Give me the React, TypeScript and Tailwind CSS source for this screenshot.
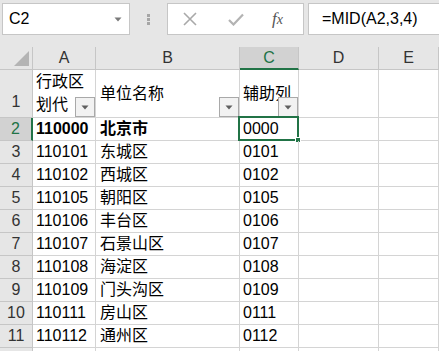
import React from 'react'

const font = { fontFamily: '"Liberation Sans","Noto Sans CJK SC",sans-serif' }

const rows = [
  ['2', '110000', '北京市', '0000'],
  ['3', '110101', '东城区', '0101'],
  ['4', '110102', '西城区', '0102'],
  ['5', '110105', '朝阳区', '0105'],
  ['6', '110106', '丰台区', '0106'],
  ['7', '110107', '石景山区', '0107'],
  ['8', '110108', '海淀区', '0108'],
  ['9', '110109', '门头沟区', '0109'],
  ['10', '110111', '房山区', '0111'],
  ['11', '110112', '通州区', '0112'],
  ['', '', '', ''],
]

function FilterButton() {
  return (
    <div className="absolute right-0 bottom-0 w-[20px] h-[20px] bg-[#f2f2f2] border border-[#a9a9a9] flex items-center justify-center">
      <svg width="8" height="5" viewBox="0 0 8 5">
        <path d="M0.5 0.5h7L4 4.5z" fill="#5f5f5f" />
      </svg>
    </div>
  )
}

export default function App() {
  const cell = 'border-r border-b border-[#d4d4d4] h-[23px] flex items-center overflow-hidden whitespace-nowrap text-[16px] text-black'
  const hdr = 'bg-[#e6e6e6] border-r border-b border-[#c6c6c6] flex items-center justify-center text-[16px] text-[#333]'

  return (
    <div className="w-[439px] h-[351px] overflow-hidden bg-white" style={font}>
      {/* formula bar */}
      <div className="h-[47px] bg-[#e6e6e6] flex items-start pt-[3px]">
        <div className="ml-[2px] w-[128px] h-[32px] bg-white border border-[#c6c6c6] flex items-center pl-[6px] pr-[7px] text-[16px] text-black">
          <span className="flex-1">C2</span>
          <svg width="8" height="5" viewBox="0 0 8 5">
            <path d="M0.5 0.5h7L4 4.5z" fill="#7a7a7a" />
          </svg>
        </div>
        <div className="w-[37px] h-[32px] flex flex-col items-center justify-center gap-[1px]">
          <div className="w-[3px] h-[3px] bg-[#a6a6a6]" />
          <div className="w-[3px] h-[3px] bg-[#a6a6a6]" />
          <div className="w-[3px] h-[3px] bg-[#a6a6a6]" />
        </div>
        <div className="w-[137px] h-[32px] bg-white border border-[#c6c6c6] flex items-center">
          <svg className="ml-[15px]" width="14" height="14" viewBox="0 0 14 14">
            <path d="M1 1L13 13M13 1L1 13" stroke="#a9a9a9" strokeWidth="1.6" />
          </svg>
          <svg className="ml-[31px]" width="16" height="13" viewBox="0 0 16 13">
            <path d="M1 7l4.5 4.5L15 1.5" stroke="#b3b3b3" strokeWidth="2.2" fill="none" />
          </svg>
          <span className="ml-[28px] text-[17px] italic text-[#555]" style={{ fontFamily: '"Liberation Serif",serif' }}>
            f<span className="text-[14px]">x</span>
          </span>
        </div>
        <div className="ml-[4px] flex-1 h-[32px] bg-white border border-r-0 border-[#c6c6c6] flex items-center pl-[13px] text-[16px] text-black">
          =MID(A2,3,4)
        </div>
      </div>

      {/* sheet */}
      <div className="grid grid-cols-[33px_63px_144px_59px_80px_1fr]">
        {/* column headers */}
        <div className="bg-[#e6e6e6] border-r border-b border-[#c6c6c6] h-[23px] flex items-end justify-end pr-[3px] pb-[3px]">
          <svg width="15" height="15" viewBox="0 0 15 15">
            <path d="M15 0V15H0z" fill="#b4b4b4" />
          </svg>
        </div>
        <div className={hdr + ' h-[23px]'}>A</div>
        <div className={hdr + ' h-[23px]'}>B</div>
        <div className="bg-[#d2d2d2] border-r border-[#c6c6c6] border-b-2 border-b-[#217346] h-[23px] flex items-center justify-center text-[16px] text-[#217346]">C</div>
        <div className={hdr + ' h-[23px]'}>D</div>
        <div className={hdr + ' h-[23px]'}>E</div>

        {/* row 1 */}
        <div className={hdr + ' h-[48px] !items-end pb-[3px]'}>1</div>
        <div className="relative border-r border-b border-[#d4d4d4] h-[48px] pl-[3px] text-[16px] leading-[23px] text-black overflow-hidden">
          <div>行政区</div>
          <div>划代</div>
          <FilterButton />
        </div>
        <div className="relative border-r border-b border-[#d4d4d4] h-[48px] pl-[4px] flex items-center text-[16px] text-black">
          单位名称
          <FilterButton />
        </div>
        <div className="relative border-r border-b border-[#d4d4d4] h-[48px] pl-[3px] flex items-center text-[16px] text-black whitespace-nowrap overflow-hidden">
          辅助列
          <FilterButton />
        </div>
        <div className={cell + ' h-[48px]'} />
        <div className={cell + ' h-[48px]'} />

        {rows.map(([n, code, name, aux], i) => {
          const sel = n === '2'
          return (
            <React.Fragment key={i}>
              {sel ? (
                <div className="bg-[#d2d2d2] border-r-2 border-r-[#217346] border-b border-[#c6c6c6] h-[23px] flex items-center justify-center text-[16px] text-[#217346]">
                  {n}
                </div>
              ) : (
                <div className={hdr + ' h-[23px]'}>{n}</div>
              )}
              <div className={cell + ' pl-[3px]' + (sel ? ' font-bold' : '')}>{code}</div>
              <div className={cell + ' pl-[4px]' + (sel ? ' font-bold' : '')}>{name}</div>
              <div className={cell + ' pl-[3px] relative !overflow-visible'}>
                {aux}
                {sel && (
                  <>
                    <div className="absolute left-[-2px] top-[-2px] right-[-1px] bottom-[-1px] border-2 border-[#217346]" />
                    <div className="absolute right-[-3px] bottom-[-3px] w-[6px] h-[6px] bg-[#217346] border border-white" />
                  </>
                )}
              </div>
              <div className={cell} />
              <div className={cell} />
            </React.Fragment>
          )
        })}
      </div>
    </div>
  )
}
